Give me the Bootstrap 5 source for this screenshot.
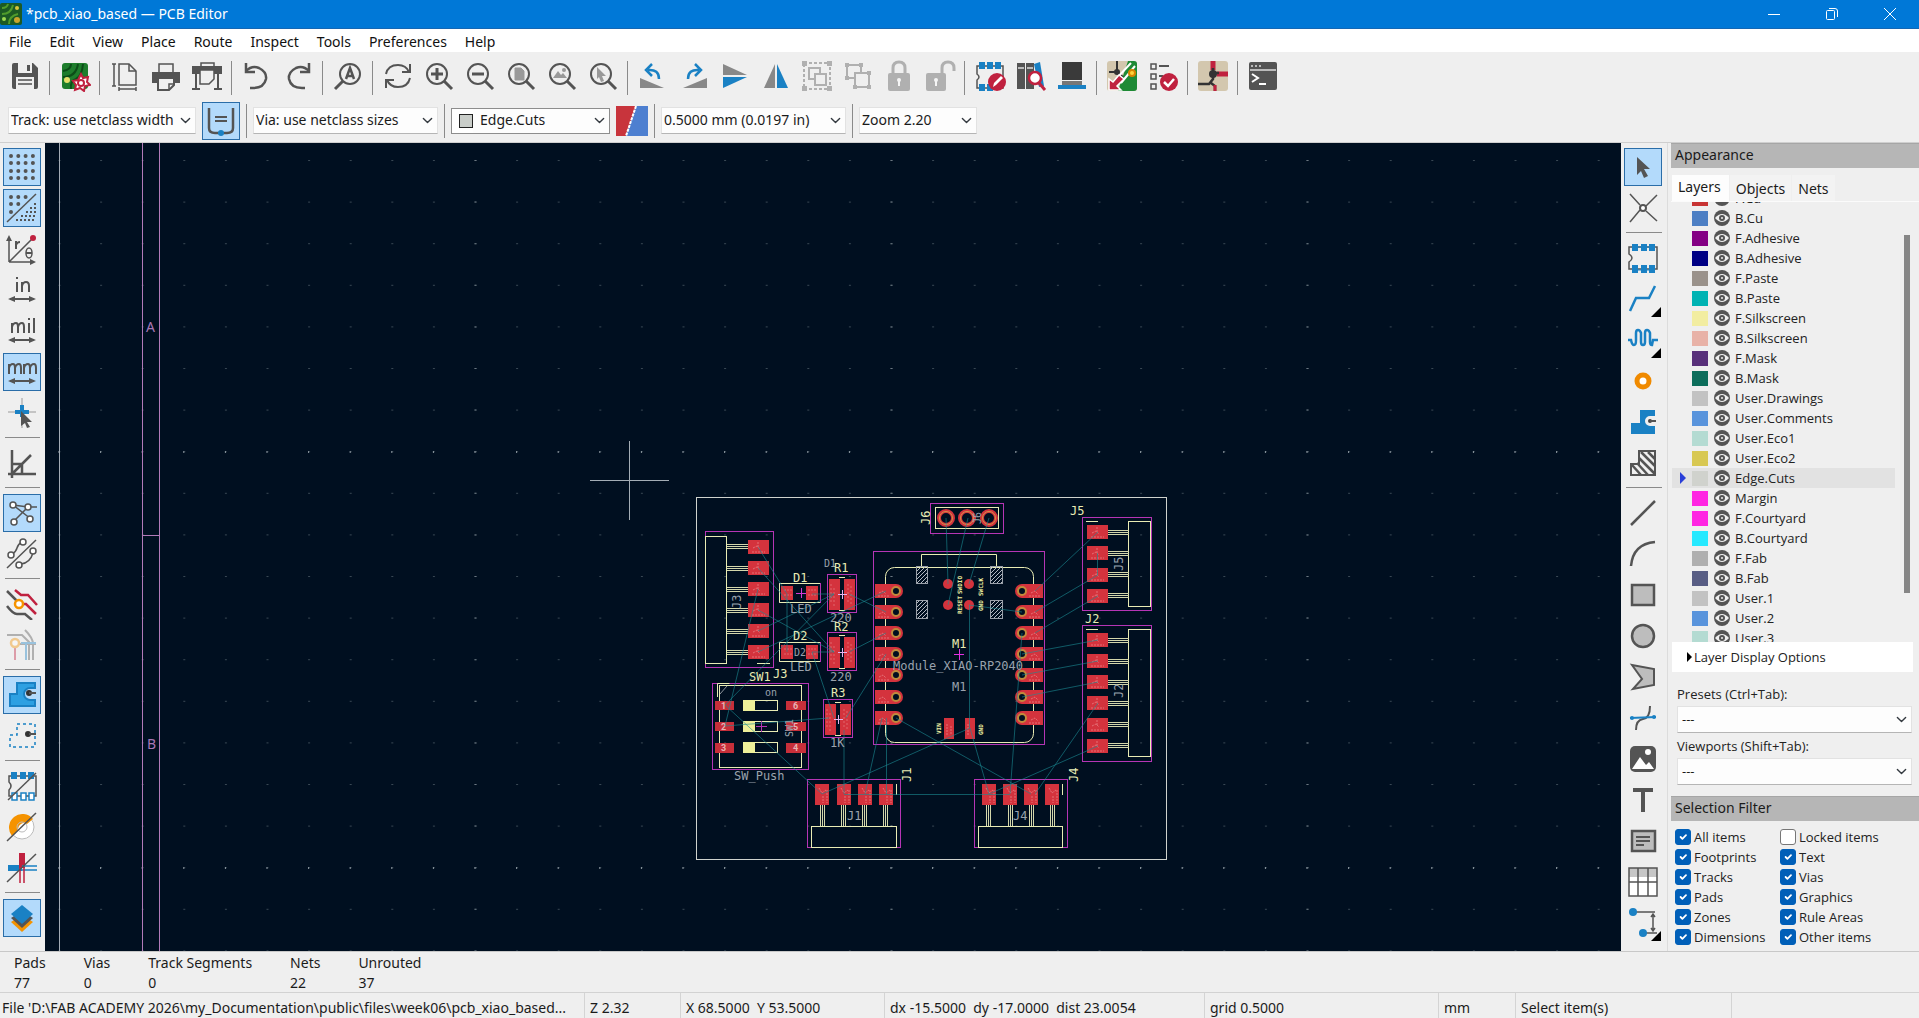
<!DOCTYPE html>
<html lang="en">
<head>
<meta charset="utf-8">
<meta name="viewport" content="width=device-width, initial-scale=1">
<title>*pcb_xiao_based — PCB Editor</title>
<link href="https://cdn.jsdelivr.net/npm/bootstrap@5.3.0/dist/css/bootstrap.min.css" rel="stylesheet">
<style>
  :root { --ui: #efefef; --ink: #545454; --blu: #1a81c4; --red: #c0213f; }
  body { font: 14px/20px "Noto Sans", "Open Sans", sans-serif; color: #1b1b1b; background: var(--ui); }
  svg { display: block; fill: none; }
  .title-strip { background: #0078d7; color: #fff; height: 29px; border-bottom: 1px solid #1467b4; }
  .title-strip button { width: 58px; height: 28px; color: #fff; }
  .menu-strip { background: #fff; height: 23px; }
  .menu-strip a { color: #111; padding: 0 9px; line-height: 25px; text-decoration: none; }
  .tool-btn { width: 38px; height: 38px; padding: 2px; border: 1px solid transparent; border-radius: 0; flex: none; position: relative;
    color: var(--ink); display: flex; align-items: center; justify-content: center; background: none; }
  .tool-btn svg { width: 32px; height: 32px; stroke: currentColor; stroke-width: 2; flex: none; }
  .tool-btn.on { background: #b3dafb; border-color: #2a6da8; }
  .tool-btn.off { opacity: .4; }
  .tool-btn.more::after { content: ""; position: absolute; right: 0; bottom: 0; border: 5px solid; border-color: transparent #000 #000 transparent; }
  .bar-main { height: 47px; padding: 5px 6px 0; gap: 3px; }
  .bar-main i, .bar-opts i { width: 1px; background: #8a8a8a; align-self: center; height: 34px; }
  .bar-main i { margin: 0 3px 0 2px; }
  .bar-opts { height: 44px; padding: 0 8px; gap: 6px; border-bottom: 1px solid #cfcfcf; }
  .pick { font: inherit; color: #1b1b1b; height: 27px; border-radius: 0; border: 1px solid #e2e2e2; border-bottom-color: #b5b5b5;
    padding: 0 18px 1px 2px; background-color: #fdfdfd; background-size: 11px 11px; background-position: right 4px center; }
  .w-track { width: 188px; } .w-via { width: 185px; } .w-zoom { width: 118px; }
  .swatch-pick { width: 159px; height: 26px; border: 1px solid #8d8d8d; background: #fff; }
  .swatch-pick b { width: 14px; height: 14px; margin-left: 7px; background: #c9cdc9; border: 1px solid #222; flex: none; }
  .swatch-pick select { border: 0; height: 24px; padding-left: 7px; }
  .rail { width: 45px; padding: 5px 3px 0; gap: 3px; flex: none; overflow: hidden; }
  .rail i { height: 1px; background: #8a8a8a; margin: 2px 2px 3px; flex: none; }
  .rail-r { width: 46px; }
  .board { background: #000f20; min-width: 0; }
  .board text { font: 12px "DejaVu Sans Mono", monospace; stroke: none; fill: #9aa2ad; }
  .board .silk { fill: #e9ecb4; }
  .board .grey-s { font-size: 10px; }
  .board .tiny { font: bold 6px "DejaVu Sans Mono", monospace; fill: #f0f2a0; }
  .board .pin { font: bold 9px Roboto, sans-serif; fill: #e9b2b4; }
  .board .frame-t { fill: #a977b5; font: 14px "Noto Sans", sans-serif; }
  .side { width: 252px; padding-left: 3px; background: var(--ui); flex: none; border-left: 1px solid #dcdcdc; }
  .side-head { background: #b6b6b6; height: 25px; line-height: 22px; padding-left: 4px; border-top: 1px solid #a6a6a6; flex: none; }
  .tab-row { height: 34px; padding: 7px 0 0 1px; border-bottom: 1px solid #fbfbfb; flex: none; }
  .tab-row button { border: 0; background: #f3f3f3; font: inherit; color: #1b1b1b; padding: 2px 6px 0; height: 26px; margin-right: 1px; }
  .tab-row button.cur { background: #fdfdfd; padding: 0 8px 2px 6px; }
  .side-small { font: 13px/20px "Open Sans", "Noto Sans", sans-serif; color: #222; }
  .layer-box { height: 440px; overflow: hidden; flex: 0 1 440px; margin-left: 1px; }
  .layer-box li { height: 20px; line-height: 20px; }
  .layer-box li.cur { background: #e2e2e2; }
  .layer-box .arr { width: 20px; padding-left: 7px; flex: none; }
  .layer-box .chip { width: 16px; height: 15px; margin-right: 6px; flex: none; }
  .layer-box svg { width: 16px; height: 16px; margin-right: 5px; flex: none; }
  .thumb-track { width: 24px; flex: none; padding: 33px 0 49px 9px; }
  .thumb-track span { display: block; width: 6px; height: 100%; background: #868686; }
  .fold { background: #fff; height: 30px; margin: 0 6px 0 1px; padding: 0 0 0 14px; border: 0; text-align: left; flex: none; }
  .side-form { padding: 12px 7px 0 6px; flex: none; }
  .side-form label { height: 22px; line-height: 20px; }
  .side-form .pick { margin-bottom: 3px; padding-left: 4px; }
  .filter-grid { padding: 6px 0 0 4px; flex: none; }
  .filter-grid div { width: 105px; height: 20px; }
  .filter-grid input { width: 16px; height: 16px; margin: 0; border: 1px solid #777; border-radius: 3px !important; flex: none; }
  .filter-grid input:checked { background-color: #005fb8; border-color: #005fb8; background-size: 12px; }
  .filter-grid label { padding-left: 3px; }
  .counts { height: 41px; padding-left: 14px; border-top: 1px solid #c8c8c8; }
  .counts th, .counts td { font-weight: 400; padding: 0 38px 0 0; line-height: 20px; text-align: left; }
  .counts table { margin-top: 1px; }
  .status-strip { height: 26px; border-top: 1px solid #d2d2d2; line-height: 29px; white-space: nowrap; }
  .status-strip span { border-right: 1px solid #d4d4d4; padding-left: 5px; flex: none; overflow: hidden; white-space: pre; }
  .status-strip .s-file { width: 585px; padding-left: 2px; } .s-z { width: 96px; } .s-xy { width: 204px; } .s-d { width: 320px; } .s-g { width: 234px; } .s-u { width: 77px; } .s-m { width: 216px; }
</style>
<script src="https://cdn.jsdelivr.net/npm/bootstrap@5.3.0/dist/js/bootstrap.bundle.min.js"></script>
</head>
<body class="vh-100 d-flex flex-column overflow-hidden">

<header class="title-strip d-flex align-items-center flex-shrink-0">
  <svg width="22" height="22" viewBox="0 0 22 22" class="me-1"><rect width="22" height="22" rx="2" fill="#1c5a23"/><path d="M2 5q5 0 6-4M2 11q9 0 11-9M9 21q0-8 9-10" stroke="#4f9c2c" stroke-width="2"/><circle cx="4" cy="16" r="2" fill="#9bd850"/><circle cx="17" cy="5" r="2" fill="#d7c53a"/><circle cx="17" cy="17" r="3" fill="#c9a52c"/></svg>
  <span class="flex-grow-1">*pcb_xiao_based — PCB Editor</span>
  <button class="btn p-0 border-0" aria-label="Minimize"><svg class="mx-auto" width="14" height="14" stroke="#fff"><path d="M1 7.500h12"/></svg></button>
  <button class="btn p-0 border-0" aria-label="Restore"><svg class="mx-auto" width="14" height="14" stroke="#fff"><rect x="1.500" y="3.500" width="8" height="9" rx="1"/><path d="M4 1.500h6q2.500 0 2.500 2.500v6"/></svg></button>
  <button class="btn p-0 border-0" aria-label="Close"><svg class="mx-auto" width="14" height="14" stroke="#fff"><path d="M1 1l12 12M13 1L1 13"/></svg></button>
  <span></span>
</header>

<nav class="menu-strip d-flex flex-shrink-0">
  <a href="#">File</a><a href="#">Edit</a><a href="#">View</a><a href="#">Place</a><a href="#">Route</a><a href="#">Inspect</a><a href="#">Tools</a><a href="#">Preferences</a><a href="#">Help</a>
</nav>

<div class="bar-main d-flex flex-shrink-0" role="toolbar" aria-label="Main">
  <button class="tool-btn" aria-label="Save"><svg viewBox="0 0 32 32"><path d="M3 5q0-2 2-2h19l5 5v19q0 2-2 2H5q-2 0-2-2z" fill="#545454" stroke="none"/><path d="M9 3h14v10H9zM7 17h18v12H7z" fill="#efefef" stroke="none"/><path d="M18 5h3v6h-3z" fill="#545454" stroke="none"/><path d="M9 20h14M9 24h14" stroke="#777"/></svg></button><i></i>
  <button class="tool-btn" aria-label="Board setup"><svg viewBox="0 0 32 32"><rect x="3" y="3" width="26" height="26" rx="3" fill="#1e7d2c" stroke="none"/><path d="M4 11q8-1 8-7M4 17q13 0 15-13M12 29q-1-8 5-10 6-3 7-15" stroke="#0c4d18"/><circle cx="8" cy="20" r="3" fill="#e6e06a" stroke="none"/><path d="M22 14l2 4 5-1-1 5 3 3-5 1-1 5-4-3-5 2 1-5-3-4 5-1z" fill="#fff" stroke="#c0213f"/><circle cx="22" cy="23" r="3" stroke="#c0213f"/></svg></button><i></i>
  <button class="tool-btn" aria-label="Page settings"><svg viewBox="0 0 32 32"><g stroke-width="1.500"><path d="M10 4h10l7 7v14H10z"/><path d="M20 4v7h7M5 4v22M3 4h4M3 26h4M10 29h17M10 27v4M27 27v4"/></g></svg></button>
  <button class="tool-btn" aria-label="Print"><svg viewBox="0 0 32 32"><path d="M9 12V4h14v8" stroke-width="1.500"/><path d="M2 12h28v11H2z" fill="#545454" stroke="none"/><path d="M8 18h16v7l-5 5H8z" fill="#efefef"/><path d="M19 29v-5h5" stroke-width="1.500"/></svg></button>
  <button class="tool-btn" aria-label="Plot"><svg viewBox="0 0 32 32"><path d="M10 6V3h13v3" stroke-width="1.500"/><path d="M1 6h30v8H1z" fill="#545454" stroke="none"/><path d="M9 10h14v9l-5 5H9z" fill="#efefef" stroke-width="1.500"/><path d="M5 14v14M27 14v14M1 29h8M23 29h8"/></svg></button><i></i>
  <button class="tool-btn" aria-label="Undo"><svg viewBox="0 0 32 32"><path d="M5 3v9h9" stroke-width="2.500"/><path d="M5 11q6-6 13-3 8 4 7 11-2 9-13 9H9" stroke-width="2.500"/></svg></button>
  <button class="tool-btn" aria-label="Redo"><svg viewBox="0 0 32 32"><path d="M27 3v9h-9" stroke-width="2.500"/><path d="M27 11q-6-6-13-3-8 4-7 11 2 9 13 9h3" stroke-width="2.500"/></svg></button><i></i>
  <button class="tool-btn" aria-label="Find"><svg viewBox="0 0 32 32"><circle cx="18" cy="14" r="10"/><path d="M11 21l-8 8" stroke-width="3"/><path d="M14 19l4-11 4 11M15 16h6" stroke-width="2.500"/></svg></button><i></i>
  <button class="tool-btn" aria-label="Refresh"><svg viewBox="0 0 32 32"><path d="M4 14q2-9 12-9 8 0 11 7M28 4v8h-8M28 18q-2 9-12 9-8 0-11-7M4 28v-8h8"/></svg></button>
  <button class="tool-btn" aria-label="Zoom in"><svg viewBox="0 0 32 32"><circle cx="14" cy="14" r="10"/><path d="M21 21l8 8" stroke-width="3"/><path d="M8 14h12M14 8v12" stroke-width="3"/></svg></button>
  <button class="tool-btn" aria-label="Zoom out"><svg viewBox="0 0 32 32"><circle cx="14" cy="14" r="10"/><path d="M21 21l8 8" stroke-width="3"/><path d="M8 14h12" stroke-width="3"/></svg></button>
  <button class="tool-btn" aria-label="Zoom to page"><svg viewBox="0 0 32 32"><circle cx="14" cy="14" r="10"/><path d="M21 21l8 8" stroke-width="3"/><path d="M10 8h6l3 3v9h-9z" fill="#999" stroke="#999" stroke-width="1"/></svg></button>
  <button class="tool-btn" aria-label="Zoom to objects"><svg viewBox="0 0 32 32"><circle cx="14" cy="14" r="10"/><path d="M21 21l8 8" stroke-width="3"/><path d="M7 18l5-7 3 4 2-2 4 5z" fill="#999" stroke="none"/><circle cx="18" cy="10" r="2" fill="#999" stroke="none"/></svg></button>
  <button class="tool-btn" aria-label="Zoom to selection"><svg viewBox="0 0 32 32"><circle cx="14" cy="14" r="10"/><path d="M21 21l8 8" stroke-width="3"/><path d="M10 7l9 9-4 0 2 5-3 1-2-5-2 2z" fill="#999" stroke="none"/></svg></button><i></i>
  <button class="tool-btn" aria-label="Rotate counterclockwise"><svg viewBox="0 0 32 32"><path d="M3 18l24 10H3z" fill="#888" stroke="none"/><path d="M11 10q11-1 11 9M15 4l-6 6 6 6" stroke="#1a81c4" stroke-width="2.500"/></svg></button>
  <button class="tool-btn" aria-label="Rotate clockwise"><svg viewBox="0 0 32 32"><path d="M29 18L5 28h24z" fill="#888" stroke="none"/><path d="M21 10q-11-1-11 9M17 4l6 6-6 6" stroke="#1a81c4" stroke-width="2.500"/></svg></button>
  <button class="tool-btn" aria-label="Mirror vertically"><svg viewBox="0 0 32 32"><path d="M4 4l24 11H4z" fill="#888" stroke="none"/><path d="M4 28l24-11H4z" fill="#1a81c4" stroke="none"/></svg></button>
  <button class="tool-btn" aria-label="Mirror horizontally"><svg viewBox="0 0 32 32"><path d="M15 4v24H4z" fill="#888" stroke="none"/><path d="M17 4v24h11z" fill="#1a81c4" stroke="none"/></svg></button>
  <button class="tool-btn off" aria-label="Group"><svg viewBox="0 0 32 32"><rect x="3" y="3" width="26" height="26" stroke-dasharray="3 2"/><path d="M1 1h5v5H1zM26 1h5v5h-5zM1 26h5v5H1zM26 26h5v5h-5z" fill="#545454" stroke="none"/><path d="M8 8h11v11H8z"/><path d="M14 14h11v11H14z" fill="#efefef"/></svg></button>
  <button class="tool-btn off" aria-label="Ungroup"><svg viewBox="0 0 32 32"><path d="M5 5h14v13H5z"/><path d="M13 13h14v14H13z" fill="#efefef"/><path d="M3 3h4v4H3zM17 3h4v4h-4zM3 16h4v4H3zM11 25h4v4h-4zM25 25h4v4h-4zM25 11h4v4h-4z" fill="#545454" stroke="none"/></svg></button>
  <button class="tool-btn off" aria-label="Lock"><svg viewBox="0 0 32 32"><rect x="5" y="13" width="22" height="18" rx="2" fill="#545454" stroke="none"/><path d="M10 14V8q0-6 6-6t6 6v6" stroke-width="3"/><circle cx="16" cy="20" r="2" fill="#fff" stroke="none"/><path d="M16 20v6" stroke="#fff"/></svg></button>
  <button class="tool-btn off" aria-label="Unlock"><svg viewBox="0 0 32 32"><rect x="2" y="13" width="20" height="18" rx="2" fill="#545454" stroke="none"/><path d="M18 14V8q0-6 6-6t6 6v3" stroke-width="3"/><circle cx="12" cy="20" r="2" fill="#fff" stroke="none"/><path d="M12 20v6" stroke="#fff"/></svg></button><i></i>
  <button class="tool-btn" aria-label="Footprint editor"><svg viewBox="0 0 32 32"><path d="M3 6h26v22H3v-8q4-3 0-6z" stroke-width="1.500"/><path d="M5 2h6v7H5zM13 2h6v7h-6zM21 2h6v7h-6zM5 24h6v7H5zM13 24h6v7h-6z" fill="#1a81c4" stroke="none"/><circle cx="23" cy="22" r="9" fill="#c0213f" stroke="none"/><path d="M19 27l1-4 7-7 2 2-7 7z" fill="#fff" stroke="none"/></svg></button>
  <button class="tool-btn" aria-label="Footprint browser"><svg viewBox="0 0 32 32"><path d="M2 3h8v26H2zM11 3h8v26h-8z" fill="#545454" stroke="none"/><path d="M3 8h6M12 8h6" stroke="#bbb"/><path d="M19 4l6-2 4 24-5 1z" fill="#1a81c4" stroke="none"/><circle cx="20" cy="18" r="6" fill="#fff" stroke="#c0213f" stroke-width="2.500"/><path d="M24 23l6 7" stroke="#c0213f" stroke-width="3"/></svg></button>
  <button class="tool-btn" aria-label="3D viewer"><svg viewBox="0 0 32 32"><path d="M6 2h20v18H6z" fill="#3a3a3a" stroke="none"/><path d="M6 21h20v4H6z" fill="#777" stroke="none"/><path d="M2 25h28v4H2z" fill="#1a81c4" stroke="none"/></svg></button><i></i>
  <button class="tool-btn" aria-label="Update from schematic"><svg viewBox="0 0 32 32"><rect x="1" y="1" width="30" height="30" rx="3" fill="#d3c7ae" stroke="none"/><path d="M22 1h6q3 0 3 3v24q0 3-3 3H12z" fill="#1e8a35" stroke="none"/><path d="M11 1v11M3 12h8l6 5" stroke="#333"/><circle cx="11" cy="12" r="3" fill="#333" stroke="none"/><path d="M25 3L10 19M29 6L15 23" stroke="#fff"/><path d="M3 19v11h12l-4-4 7-7-5-4-6 7z" fill="#c0213f" stroke="#fff" stroke-width="1.500"/><circle cx="26" cy="13" r="3" fill="#ffd23a" stroke="#d88400"/></svg></button>
  <button class="tool-btn" aria-label="Design rules check"><svg viewBox="0 0 32 32"><path d="M4 4h5v5H4zM4 14h5v5H4zM4 24h5v5H4z" stroke-width="1.500"/><path d="M12 6h10M12 16h4"/><circle cx="22" cy="22" r="9" fill="#c0213f" stroke="none"/><path d="M17 22l4 4 6-7" stroke="#fff" stroke-width="2.500"/></svg></button><i></i>
  <button class="tool-btn" aria-label="Schematic editor"><svg viewBox="0 0 32 32"><rect x="1" y="1" width="30" height="30" rx="3" fill="#d3c7ae" stroke="none"/><path d="M16 1v9" stroke="#c0213f" stroke-width="5"/><path d="M20 14h11" stroke="#c0213f" stroke-width="5"/><path d="M16 8v11l-4 5H1M14 23l4 3v5M16 13h6" stroke="#333" stroke-width="2.500"/><circle cx="16" cy="14" r="4" fill="#333" stroke="none"/><path d="M18 25v6" stroke="#c0213f" stroke-width="3"/></svg></button><i></i>
  <button class="tool-btn" aria-label="Scripting console"><svg viewBox="0 0 32 32"><rect x="2" y="2" width="28" height="28" rx="2" fill="#545454" stroke="none"/><path d="M4 6h2M8 6h2M12 6h2M3 10h26" stroke="#ddd" stroke-width="1.500"/><path d="M5 14l6 4-6 4M12 24h7" stroke="#fff"/></svg></button>
</div>

<div class="bar-opts d-flex align-items-center flex-shrink-0" role="toolbar" aria-label="Options">
  <select class="form-select pick w-track" aria-label="Track width"><option>Track: use netclass width</option></select>
  <button class="tool-btn on" aria-label="Auto track width"><svg viewBox="0 0 32 32"><path d="M4 3v20q0 5 6 5h12q6 0 6-5V3" stroke-width="2.500"/><path d="M10 12h12M10 16h12"/><circle cx="16" cy="28" r="3" fill="#1a81c4" stroke="none"/></svg></button><i></i>
  <select class="form-select pick w-via" aria-label="Via size"><option>Via: use netclass sizes</option></select><i></i>
  <div class="swatch-pick d-flex align-items-center"><b></b><select class="form-select pick" aria-label="Active layer"><option>Edge.Cuts</option></select></div>
  <svg width="32" height="30" viewBox="0 0 32 30" role="img" aria-label="Layer pair"><path d="M0 0h20L10 30H0z" fill="#c8343c"/><path d="M20 0h12v30H10z" fill="#4d7fd0"/><path d="M20 0L10 30" stroke="#fff" stroke-width="2" stroke-dasharray="3 1"/></svg><i></i>
  <select class="form-select pick w-via" aria-label="Grid"><option>0.5000 mm (0.0197 in)</option></select><i></i>
  <select class="form-select pick w-zoom" aria-label="Zoom"><option>Zoom 2.20</option></select>
</div>

<main class="d-flex flex-grow-1 overflow-hidden">
  <div class="rail d-flex flex-column" role="toolbar" aria-label="View options">
    <button class="tool-btn on" aria-label="Show grid"><svg viewBox="0 0 32 32"><path d="M5 5h24M5 12h24M5 20h24M5 27h24" stroke-width="4" stroke-linecap="round" stroke-dasharray="0 7.300"/></svg></button>
    <button class="tool-btn on" aria-label="Grid overrides"><svg viewBox="0 0 32 32"><path d="M5 5h16M5 12h9M5 20h1" stroke-width="4" stroke-linecap="round" stroke-dasharray="0 7.300"/><path d="M1 30L30 2" stroke-width="1.500"/><path d="M28 12h2M24 16h6M20 20h10M15 24h15M10 28h20" stroke-dasharray="2 2"/></svg></button>
    <button class="tool-btn" aria-label="Polar coordinates"><svg viewBox="0 0 32 32"><path d="M3 29V6M3 29h23M3 29L26 6" stroke-width="1.500"/><path d="M0 8l3-6 3 6zM24 26l6 3-6 3z" fill="#545454" stroke="none"/><circle cx="27" cy="5" r="3" fill="#c0213f" stroke="none"/><path d="M10 16V8M10 12q1-3 4-3" /><ellipse cx="23" cy="20" rx="3" ry="5" stroke-width="1.500"/><path d="M20 20h6"/></svg></button>
    <button class="tool-btn" aria-label="Inches"><svg viewBox="0 0 32 32"><path d="M11 8v10M11 3v2M16 18V8M16 12q1-4 4-4 3 0 3 4v6"/><path d="M4 25h24"/><path d="M9 22l-7 3 7 3zM23 22l7 3-7 3z" fill="#545454" stroke="none"/></svg></button>
    <button class="tool-btn" aria-label="Mils"><svg viewBox="0 0 32 32"><path d="M6 18V8M6 12q1-4 4-4 2 0 2 4v6M12 12q1-4 4-4 2 0 2 4v6M23 8v10M23 3v2M28 3v15"/><path d="M4 25h24"/><path d="M9 22l-7 3 7 3zM23 22l7 3-7 3z" fill="#545454" stroke="none"/></svg></button>
    <button class="tool-btn on" aria-label="Millimeters"><svg viewBox="0 0 32 32"><path d="M3 18V8M3 12q1-4 4-4 2 0 2 4v6M9 12q1-4 4-4 2 0 2 4v6M18 18V8M18 12q1-4 4-4 2 0 2 4v6M24 12q1-4 4-4 2 0 2 4v6"/><path d="M4 25h24"/><path d="M9 22l-7 3 7 3zM23 22l7 3-7 3z" fill="#545454" stroke="none"/></svg></button>
    <button class="tool-btn" aria-label="Full crosshair"><svg viewBox="0 0 32 32"><path d="M2 15h28M16 1v30" stroke="#999" stroke-width="1"/><path d="M9 15h14M16 8v12" stroke="#1a81c4" stroke-width="4"/><path d="M15 14l11 11-5 0 3 5-3 1-2-5-4 3z" fill="#545454" stroke="none"/></svg></button><i></i>
    <button class="tool-btn" aria-label="Limit angles"><svg viewBox="0 0 32 32"><path d="M6 3v28M2 27h28M5 28L25 8M6 17h10v10" stroke-width="2.500"/></svg></button><i></i>
    <button class="tool-btn on" aria-label="Ratsnest"><svg viewBox="0 0 32 32"><path d="M7 8l18 14M7 25L22 10h9" stroke-width="1.500"/><path d="M7 8l15 2" stroke-width="1.500"/><g fill="#fff" stroke-width="1.500"><circle cx="7" cy="8" r="3"/><circle cx="22" cy="10" r="3"/><circle cx="24" cy="22" r="3"/><circle cx="8" cy="25" r="3"/></g></svg></button>
    <button class="tool-btn" aria-label="Curved ratsnest"><svg viewBox="0 0 32 32" ><path d="M1 30L30 2M6 16q4-2 5-6t5-6M15 26q9-1 12-11" stroke-width="1.500"/><g fill="#fff" stroke-width="1.500"><circle cx="5" cy="17" r="3"/><circle cx="17" cy="4" r="3"/><circle cx="13" cy="27" r="3"/><circle cx="27" cy="13" r="3"/></g></svg></button><i></i>
    <button class="tool-btn" aria-label="High contrast"><svg viewBox="0 0 32 32" ><path d="M1 3l9 9 5 4M1 18q6 8 10 8h8l7 6" stroke-width="2.500"/><path d="M9 2l6 5h7l9 10M15 16h5l10 10" stroke="#c0213f" stroke-width="2.500"/><circle cx="13" cy="16" r="4" fill="#fff" stroke="#f59300" stroke-width="2.500"/></svg></button>
    <button class="tool-btn off" aria-label="Net highlight"><svg viewBox="0 0 32 32"><path d="M1 6h15l7 7v18M19 1q8 8 8 14v16M12 15h18" /><path d="M9 17v14" stroke="#c0213f"/><path d="M15 14h15M20 15v16" stroke="#1a81c4"/><circle cx="9" cy="14" r="4" fill="#fff" stroke="#f59300" stroke-width="2.500"/></svg></button><i></i>
    <button class="tool-btn on" aria-label="Filled zones"><svg viewBox="0 0 32 32"><path d="M11 4h18v5h-5a5 5 0 0 0 0 12h5v6H4V15h7z" fill="#2ea0e2" stroke="#1a81c4"/><circle cx="23" cy="14" r="2" fill="#333" stroke="#333"/><path d="M23 14h7"/></svg></button>
    <button class="tool-btn" aria-label="Zone outlines"><svg viewBox="0 0 32 32"><path d="M11 4h18v23H4V15h7z" stroke="#1a81c4" stroke-dasharray="3 3" stroke-width="1.500"/><circle cx="22" cy="14" r="2" fill="#333" stroke="#333"/><path d="M23 14h7"/></svg></button><i></i>
    <button class="tool-btn" aria-label="Sketch pads"><svg viewBox="0 0 32 32"><path d="M3 6h27v20H3v-6q4-4 0-8z" stroke-width="1.500"/><path d="M5 2h6v7H5zM14 2h6v7h-6zM22 2h6v7h-6z" fill="#1a81c4" stroke="none"/><path d="M6 23h5v7H6zM15 23h5v7h-5zM23 23h5v7h-5z" fill="#fff" stroke="#1a81c4" stroke-width="1.500"/><path d="M2 30L30 3" stroke-width="1.500"/></svg></button>
    <button class="tool-btn" aria-label="Sketch vias"><svg viewBox="0 0 32 32"><circle cx="16" cy="16" r="12" fill="#fff" stroke="#bbb" stroke-width="1"/><path d="M6 25A12 12 0 0 1 27 8l-6 5a6 6 0 0 0-9 6z" fill="#f59300" stroke="none"/><circle cx="16" cy="16" r="5" stroke="#bbb" stroke-width="1"/><path d="M1 30L30 2" stroke-width="1.500"/></svg></button>
    <button class="tool-btn" aria-label="Sketch tracks"><svg viewBox="0 0 32 32"><path d="M2 16h14" stroke="#1a81c4" stroke-width="6"/><path d="M16 1v15" stroke="#c0213f" stroke-width="6"/><path d="M16 14h15M16 18h15" stroke="#1a81c4" stroke-width="1.500"/><path d="M14 16v15M18 16v15" stroke="#c0213f" stroke-width="1.500"/><path d="M1 30L30 2" stroke-width="1.500"/></svg></button><i></i>
    <button class="tool-btn on" aria-label="Layers manager"><svg viewBox="0 0 32 32"><path d="M5 20l11 10 11-10-11-7z" fill="#f59300" stroke="none"/><path d="M5 16l11 10 11-10-11-7z" fill="#545454" stroke="none"/><path d="M5 12l11-9 11 9-11 10z" fill="#1a81c4" stroke="none"/></svg></button>
  </div>

  <section class="board flex-grow-1" aria-label="Board canvas">
  <svg width="100%" height="100%" viewBox="45 143 1576 808" preserveAspectRatio="xMinYMin slice">
    <defs>
      <pattern id="dots" patternUnits="userSpaceOnUse" x="58.500" y="160" width="41.600" height="41.600"><rect width="2" height="1" fill="#384753"/></pattern>
      <pattern id="hatch" patternUnits="userSpaceOnUse" width="4" height="4"><path d="M0 4L4 0" stroke="#b5bbc4"/></pattern>
      <g id="padH"><rect x="-10" y="-7" width="21" height="14" fill="#d4333d"/><path d="M-5 1l4-2 3 3M-6 5h13M0-5v5" stroke="#ee9a9c" stroke-opacity=".6" stroke-dasharray="2 1"/></g>
      <g id="padV"><rect x="-7" y="-10" width="14" height="21" fill="#d4333d"/><path d="M-3-6l3 5 4-3M5-4v13M1 2v7" stroke="#ee9a9c" stroke-opacity=".6" stroke-dasharray="2 1"/></g>
      <g id="pinH"><path d="M0-1.500h21M0 .500h21M0 2.500h21" stroke="#d4d7ab"/></g>
      <g id="pinV"><path d="M-1.500 0v21M.500 0v21M2.500 0v21" stroke="#d4d7ab"/></g>
      <g id="castL"><rect x="-21" y="-7" width="21" height="14" fill="#d4333d"/><circle r="7" fill="#d4333d"/><circle r="4" fill="#000f20" stroke="#c08b3c" stroke-width="2"/><path d="M-17 2l4-2 3 3M-18 5h12" stroke="#ee9a9c" stroke-opacity=".6" stroke-dasharray="2 1"/></g>
      <g id="castR"><rect y="-7" width="21" height="14" fill="#d4333d"/><circle r="7" fill="#d4333d"/><circle r="4" fill="#000f20" stroke="#c08b3c" stroke-width="2"/><path d="M9 2l4-2 3 3M7 5h12" stroke="#ee9a9c" stroke-opacity=".6" stroke-dasharray="2 1"/></g>
      <g id="res"><rect x="-14.500" y="-19.500" width="29" height="38" stroke="#b535b5"/><path d="M-13-15h11v31h-11zM2-15h11v31H2z" fill="#d4333d"/><path d="M-11-10v20M-8-6v18M6-10v20M9-8v18" stroke="#ee9a9c" stroke-opacity=".5" stroke-dasharray="2 2"/><path d="M-3-16.500h6M-3 16.500h6" stroke="#e9ecb4"/><path d="M-4 .500h9M.500-4v9" stroke="#e4b4ee"/></g>
      <g id="led"><rect x="-20.500" y="-9.500" width="41" height="19" stroke="#b535b5"/><path d="M20-9.500h-40.500v19h40.500" stroke="#e9ecb4"/><path d="M-19-7h12v14h-12zM6-7h12V7H6z" fill="#d4333d"/><path d="M-16-3h8M-16 2h8M8-3h8M8 2h8" stroke="#ee9a9c" stroke-opacity=".5" stroke-dasharray="2 1"/></g>
      <g id="dip"><rect x=".500" y=".500" width="34" height="10" stroke="#e9ecb4"/><rect width="12" height="11" fill="#eef09a"/></g>
      <g id="hole"><circle r="7" fill="#000f20" stroke="#d4333d" stroke-width="4"/><circle r="6.500" stroke="#d29445"/></g>
    </defs>
    <rect x="45" y="143" width="1576" height="808" fill="url(#dots)"/>
    <path d="M58.500 452H1621M58.500 868H1621" stroke="#8d98a1" stroke-width="2" stroke-dasharray="1 40.600"/>
    <path d="M475.500 160V951M891.500 160V951M1307.500 160V951" stroke="#6b7781" stroke-width="2" stroke-dasharray="1 40.600"/>
    <path d="M59.500 143V951" stroke="#a3abb5"/>
    <path d="M142.500 143V951M159.500 143V951M142.500 535.500h17" stroke="#b27ab8"/>
    <text class="frame-t" x="146" y="332">A</text><text class="frame-t" x="147" y="749">B</text>
    <path d="M590 480.500h79M629.500 441v79" stroke="#a4adb5"/>
    <rect x="696.500" y="497.500" width="470" height="362" stroke="#cfd2cd"/>

    <!-- courtyards -->
    <g stroke="#b535b5">
      <rect x="705.500" y="531.500" width="68" height="136"/><rect x="712.500" y="683.500" width="96" height="86"/>
      <rect x="807.500" y="779.500" width="93" height="68"/><rect x="974.500" y="779.500" width="93" height="68"/>
      <rect x="930.500" y="503.500" width="73" height="30"/><rect x="873.500" y="551.500" width="171" height="193"/>
      <rect x="1082.500" y="517.500" width="69" height="93"/><rect x="1082.500" y="625.500" width="69" height="136"/>
      <path d="M954 654.500h10M959.500 649v11" stroke="#e531e5"/>
    </g>
    <!-- silkscreen outlines -->
    <g stroke="#e9ecb4">
      <rect x="705.500" y="536.500" width="21" height="127"/><path d="M757 663.500h13"/>
      <rect x="719.500" y="685.500" width="82" height="82"/><path d="M717.500 697v-13.500h12" /><path d="M720 694l7-8" stroke="#8d939b"/>
      <rect x="811.500" y="826.500" width="85" height="21"/><path d="M896.500 784v11"/>
      <rect x="978.500" y="826.500" width="84" height="21"/><path d="M1062.500 784v11"/>
      <rect x="935.500" y="507.500" width="63" height="21"/>
      <rect x="885.500" y="567.500" width="148" height="175" rx="9"/><path d="M921.500 567v-12.500h75V567"/>
      <rect x="1128.500" y="521.500" width="22" height="85"/><path d="M1086 521.500h12"/>
      <rect x="1128.500" y="629.500" width="22" height="127"/><path d="M1086 629.500h12"/>
    </g>
    <g fill="url(#hatch)" stroke="#9ba1aa"><rect x="916.500" y="566.500" width="11" height="17"/><rect x="916.500" y="600.500" width="11" height="18"/><rect x="990.500" y="566.500" width="12" height="17"/><rect x="990.500" y="600.500" width="12" height="18"/></g>

    <!-- J3 -->
    <use href="#pinH" x="727" y="546"/><use href="#pinH" x="727" y="568"/><use href="#pinH" x="727" y="589"/><use href="#pinH" x="727" y="610"/><use href="#pinH" x="727" y="631"/><use href="#pinH" x="727" y="652"/>
    <use href="#padH" x="758" y="547"/><use href="#padH" x="758" y="568"/><use href="#padH" x="758" y="589"/><use href="#padH" x="758" y="610"/><use href="#padH" x="758" y="631"/><use href="#padH" x="758" y="652"/>
    <!-- J5, J2 -->
    <use href="#pinH" x="1108" y="532"/><use href="#pinH" x="1108" y="553"/><use href="#pinH" x="1108" y="574"/><use href="#pinH" x="1108" y="595"/>
    <use href="#padH" x="1097" y="532"/><use href="#padH" x="1097" y="553"/><use href="#padH" x="1097" y="575"/><use href="#padH" x="1097" y="596"/>
    <use href="#pinH" x="1108" y="640"/><use href="#pinH" x="1108" y="661"/><use href="#pinH" x="1108" y="682"/><use href="#pinH" x="1108" y="703"/><use href="#pinH" x="1108" y="724"/><use href="#pinH" x="1108" y="745"/>
    <use href="#padH" x="1097" y="640"/><use href="#padH" x="1097" y="661"/><use href="#padH" x="1097" y="682"/><use href="#padH" x="1097" y="703"/><use href="#padH" x="1097" y="725"/><use href="#padH" x="1097" y="746"/>
    <!-- J1, J4 -->
    <use href="#pinV" x="822" y="805"/><use href="#pinV" x="843" y="805"/><use href="#pinV" x="864" y="805"/><use href="#pinV" x="885" y="805"/>
    <use href="#padV" x="822" y="794"/><use href="#padV" x="844" y="794"/><use href="#padV" x="865" y="794"/><use href="#padV" x="886" y="794"/>
    <use href="#pinV" x="988" y="805"/><use href="#pinV" x="1010" y="805"/><use href="#pinV" x="1031" y="805"/><use href="#pinV" x="1052" y="805"/>
    <use href="#padV" x="989" y="794"/><use href="#padV" x="1010" y="794"/><use href="#padV" x="1031" y="794"/><use href="#padV" x="1052" y="794"/>
    <!-- M1 -->
    <use href="#castL" x="896" y="591"/><use href="#castL" x="896" y="612"/><use href="#castL" x="896" y="633"/><use href="#castL" x="896" y="654"/><use href="#castL" x="896" y="675"/><use href="#castL" x="896" y="697"/><use href="#castL" x="896" y="718"/>
    <use href="#castR" x="1022" y="591"/><use href="#castR" x="1022" y="612"/><use href="#castR" x="1022" y="633"/><use href="#castR" x="1022" y="654"/><use href="#castR" x="1022" y="675"/><use href="#castR" x="1022" y="697"/><use href="#castR" x="1022" y="718"/>
    <g fill="#d4333d"><circle cx="948" cy="584" r="5"/><circle cx="969" cy="584" r="5"/><circle cx="948" cy="605" r="5"/><circle cx="969" cy="605" r="5"/><path d="M944 718h10v21h-10zM965 718h10v21h-10z"/></g>
    <path d="M947 724v11M951 726v9M968 724v11" stroke="#ee9a9c" stroke-opacity=".6" stroke-dasharray="2 1"/>
    <!-- J6 -->
    <use href="#hole" x="946" y="518"/><use href="#hole" x="967" y="518"/><use href="#hole" x="989" y="518"/>
    <!-- resistors and LEDs -->
    <use href="#res" x="842" y="594"/><use href="#res" x="842" y="652"/><use href="#res" x="838" y="719"/>
    <use href="#led" x="800" y="593"/><use href="#led" x="800" y="652"/><path d="M796 593.500h10M801.500 588v10" stroke="#d43ad4"/>
    <!-- SW1 -->
    <g fill="#c72f3a"><path d="M715 701h19v9h-19zM715 722h19v9h-19zM715 743h19v10h-19zM786 701h20v9h-20zM786 722h20v9h-20zM786 743h20v10h-20z"/></g>
    <use href="#dip" x="743" y="700"/><use href="#dip" x="743" y="721"/><use href="#dip" x="743" y="742"/>
    <path d="M756 726.500h11M761.500 721v11" stroke="#b535b5"/>
    <text class="pin" x="721" y="709">1</text><text class="pin" x="721" y="730">2</text><text class="pin" x="721" y="751">3</text><text class="pin" x="793" y="709">6</text><text class="pin" x="793" y="730">5</text><text class="pin" x="793" y="751">4</text>

    <!-- ratsnest -->
    <g stroke="#1b8c94" stroke-opacity=".6">
      <path d="M758 547L787 594V652M758 568L834 652M758 589L725 726M758 610L834 652M758 631L834 594M758 652L886 591M812 594h22M849 594L886 612M812 652h22M849 652L886 633M812 652L834 718M846 718L886 654M829 718L725 726M725 705L834 594M725 705L822 794M844 730V794M822 794L970 728M865 794L882 718M886.500 794V718M844 794.500H1010"/>
      <path d="M896 718L1031 794M970 728L989 794M969.500 605V728M969 605L1022 612M946 518L948 584M968 518L948 605M989 518L969 584M1035 591L1098 532M1035 612L1098 575M1035 633L1098 596M1097.500 553V575M1022 654L1098 640M1022 675L1098 661M1022 697L1098 682M1022 633L1010 794M1098 703L1035 794M1098 746L989 794"/>
    </g>

    <!-- labels -->
    <text class="grey-s" x="824" y="567">D1</text><text class="silk" x="793" y="582">D1</text><text x="790" y="613">LED</text><text class="silk" x="834" y="572">R1</text><text x="830" y="622">220</text>
    <text class="silk" x="793" y="640">D2</text><text x="790" y="671">LED</text><text class="silk" x="834" y="631">R2</text><text x="830" y="681">220</text>
    <text class="grey-s" x="794" y="656">D2</text>
    <text class="silk" x="831" y="697">R3</text><text x="830" y="747">1K</text>
    <text class="silk" x="749" y="681">SW1</text><text class="silk" x="773" y="678">J3</text><text class="grey-s" x="765" y="696">on</text><text x="734" y="780">SW_Push</text>
    <text transform="translate(741 609) rotate(-90)">J3</text><text class="grey-s" transform="translate(793 737) rotate(-90)">SW1</text>
    <text class="silk" x="1070" y="515">J5</text><text class="silk" x="1085" y="623">J2</text>
    <text transform="translate(1123 571) rotate(-90)">J5</text><text transform="translate(1123 698) rotate(-90)">J2</text>
    <text x="847" y="820">J1</text><text x="1013" y="820">J4</text>
    <text class="silk" transform="translate(911 782) rotate(-90)">J1</text><text class="silk" transform="translate(1078 782) rotate(-90)">J4</text>
    <text class="silk" transform="translate(930 525) rotate(-90)">J6</text><text class="grey-s" transform="translate(981 524) rotate(-90)">J6</text>
    <text class="silk" x="952" y="648">M1</text><text x="893" y="670">Module_XIAO-RP2040</text><text x="952" y="691">M1</text>
    <text class="tiny" transform="translate(962 614) rotate(-90)">RESET</text><text class="tiny" transform="translate(962 594) rotate(-90)">SWDIO</text>
    <text class="tiny" transform="translate(983 611) rotate(-90)">GND</text><text class="tiny" transform="translate(983 596) rotate(-90)">SWCLK</text>
    <text class="tiny" transform="translate(941 734) rotate(-90)">VIN</text><text class="tiny" transform="translate(983 735) rotate(-90)">GND</text>
  </svg>
  </section>

  <div class="rail rail-r d-flex flex-column" role="toolbar" aria-label="Drawing tools">
    <button class="tool-btn on" aria-label="Select"><svg viewBox="0 0 32 32"><path d="M10 6l13 12h-6l4 7-4 2-3-7-4 4z" fill="#545454" stroke="none"/></svg></button>
    <button class="tool-btn" aria-label="Local ratsnest"><svg viewBox="0 0 32 32"><path d="M3 2l10 11M30 3L19 14M19 19l11 10M13 18L3 30" stroke-width="1.500"/><circle cx="16" cy="16" r="3" fill="#fff"/></svg></button><i></i>
    <button class="tool-btn" aria-label="Place footprint"><svg viewBox="0 0 32 32"><path d="M2 5h28v22H2v-7q6-4 0-8z" stroke-width="1.500"/><path d="M5 2h6v7H5zM14 2h6v7h-6zM22 2h6v7h-6zM5 23h6v8H5zM14 23h6v8h-6zM22 23h6v8h-6z" fill="#1a81c4" stroke="none"/><path d="M5 5h22M5 28h22" stroke="#1a81c4" stroke-width="1"/></svg></button>
    <button class="tool-btn more" aria-label="Route track"><svg viewBox="0 0 32 32"><path d="M3 28l6-13h13l6-12" stroke="#1a81c4" stroke-width="2.500"/></svg></button>
    <button class="tool-btn more" aria-label="Tune length"><svg viewBox="0 0 32 32"><path d="M1 16h3q1 5 3 5t2-5V9q0-3 2-3t3 3v9q0 3 2 3t2-3V9q0-3 2-3t3 3v9q0 3 2 3l1-5h5" stroke="#1a81c4" stroke-width="2.500"/></svg></button>
    <button class="tool-btn" aria-label="Add via"><svg viewBox="0 0 32 32"><circle cx="16" cy="16" r="6" fill="#fff" stroke="#f08a00" stroke-width="5"/></svg></button>
    <button class="tool-btn" aria-label="Add zone"><svg viewBox="0 0 32 32"><path d="M13 4h15v6h-5a4 4 0 0 0 0 10h5v8H4V17h9z" fill="#1a81c4" stroke="none"/><circle cx="23" cy="15" r="2" fill="#444" stroke="none"/><path d="M23 15h6"/></svg></button>
    <button class="tool-btn" aria-label="Rule area"><svg viewBox="0 0 32 32"><path d="M12 4h16v24H4V17h8z"/><path d="M12 11l16 16M14 5l14 14M21 5l7 7M10 16l11 12M5 18l9 10" stroke-width="2.500"/></svg></button><i></i>
    <button class="tool-btn" aria-label="Draw line"><svg viewBox="0 0 32 32"><path d="M4 28L28 4" stroke-width="2.500"/></svg></button>
    <button class="tool-btn" aria-label="Draw arc"><svg viewBox="0 0 32 32"><path d="M4 28Q6 6 28 4" stroke-width="2.500"/></svg></button>
    <button class="tool-btn" aria-label="Draw rectangle"><svg viewBox="0 0 32 32"><path d="M5 6h22v20H5z" fill="#bdbdbd" stroke-width="2.500"/></svg></button>
    <button class="tool-btn" aria-label="Draw circle"><svg viewBox="0 0 32 32"><circle cx="16" cy="16" r="11" fill="#bdbdbd" stroke-width="2.500"/></svg></button>
    <button class="tool-btn" aria-label="Draw polygon"><svg viewBox="0 0 32 32"><path d="M5 4l22 4v16L6 28l9-10z" fill="#bdbdbd"/></svg></button>
    <button class="tool-btn" aria-label="Draw bezier"><svg viewBox="0 0 32 32"><path d="M9 28q0-10 7-11t7-13"/><path d="M3 16l26-1" stroke="#1a81c4"/><circle cx="5" cy="16" r="2" fill="#1a81c4" stroke="none"/><circle cx="27" cy="15" r="2" fill="#1a81c4" stroke="none"/></svg></button>
    <button class="tool-btn" aria-label="Place image"><svg viewBox="0 0 32 32"><rect x="3" y="3" width="26" height="26" rx="5" fill="#545454" stroke="none"/><path d="M5 26l8-12 6 8 3-3 5 7z" fill="#fff" stroke="none"/><circle cx="21" cy="9" r="3" fill="#fff" stroke="none"/></svg></button>
    <button class="tool-btn" aria-label="Place text"><svg viewBox="0 0 32 32"><path d="M6 6h20M16 5v23" stroke-width="4"/></svg></button>
    <button class="tool-btn" aria-label="Text box"><svg viewBox="0 0 32 32"><path d="M5 6h23v20H5z" fill="#bdbdbd" stroke-width="2.500"/><path d="M9 12h14M9 16h14M9 20h8"/></svg></button>
    <button class="tool-btn" aria-label="Table"><svg viewBox="0 0 32 32"><path d="M2 2h28v28H2z" fill="#fff" stroke="none"/><path d="M2 2h28v9H2z" fill="#c6c6c6" stroke="none"/><path d="M2 2h28v28H2zM2 16h28M11 2v28M21 2v28" stroke-width="1.500"/></svg></button>
    <button class="tool-btn more" aria-label="Dimension"><svg viewBox="0 0 32 32"><path d="M6 5h22M16 26h14M26 8v16M24 10l2-3 2 3M24 21l2 3 2-3" stroke-width="1.500"/><circle cx="6" cy="5" r="4" fill="#1a81c4" stroke="none"/><circle cx="16" cy="26" r="4" fill="#1a81c4" stroke="none"/></svg></button>
  </div>

  <aside class="side d-flex flex-column">
    <div class="side-head">Appearance</div>
    <div class="tab-row d-flex" role="tablist"><button class="cur" role="tab">Layers</button><button role="tab">Objects</button><button role="tab">Nets</button></div>
    <div class="d-flex side-small overflow-hidden">
      <div class="layer-box flex-grow-1" id="layerBox"><ul class="list-unstyled m-0" id="layerList"></ul></div>
      <div class="thumb-track"><span></span></div>
    </div>
    <button class="fold side-small d-flex align-items-center"><svg width="8" height="12"><path d="M1 1l5 5-5 5z" fill="#000"/></svg>Layer Display Options</button>
    <div class="side-form side-small">
      <label class="d-block" for="presets">Presets (Ctrl+Tab):</label>
      <select id="presets" class="form-select pick"><option>---</option></select>
      <label class="d-block" for="views">Viewports (Shift+Tab):</label>
      <select id="views" class="form-select pick"><option>---</option></select>
    </div>
    <div class="side-head mt-2">Selection Filter</div>
    <div class="filter-grid side-small d-flex flex-wrap" id="filters"></div>
  </aside>
</main>

<footer class="flex-shrink-0">
  <div class="counts">
    <table><thead><tr><th>Pads</th><th>Vias</th><th>Track Segments</th><th>Nets</th><th>Unrouted</th></tr></thead>
    <tbody><tr><td>77</td><td>0</td><td>0</td><td>22</td><td>37</td></tr></tbody></table>
  </div>
  <div class="status-strip d-flex">
    <span class="s-file">File 'D:\FAB ACADEMY 2026\my_Documentation\public\files\week06\pcb_xiao_based...</span><span class="s-z">Z 2.32</span><span class="s-xy">X 68.5000  Y 53.5000</span><span class="s-d">dx -15.5000  dy -17.0000  dist 23.0054</span><span class="s-g">grid 0.5000</span><span class="s-u">mm</span><span class="s-m">Select item(s)</span>
  </div>
</footer>

<script>
  const layers = [["F.Cu","#c83434"],["B.Cu","#4d7fc4"],["F.Adhesive","#840084"],["B.Adhesive","#000084"],["F.Paste","#9a928b"],["B.Paste","#00b3b3"],
    ["F.Silkscreen","#f2eda1"],["B.Silkscreen","#e8b2a7"],["F.Mask","#58307a"],["B.Mask","#0d6e5c"],["User.Drawings","#c2c2c2"],["User.Comments","#5994dc"],
    ["User.Eco1","#b4dbd2"],["User.Eco2","#d8c852"],["Edge.Cuts","#d0d2cd"],["Margin","#ff26e2"],["F.Courtyard","#ff26e2"],["B.Courtyard","#26e9ff"],
    ["F.Fab","#afafaf"],["B.Fab","#585d84"],["User.1","#c2c2c2"],["User.2","#5994dc"],["User.3","#b4dbd2"],["User.4","#d8c852"]];
  document.getElementById("layerList").innerHTML = layers.map(([name, color]) => {
    const cur = name === "Edge.Cuts";
    return `<li class="d-flex align-items-center${cur ? " cur" : ""}"><span class="arr">${cur ? '<svg viewBox="0 0 16 16"><path d="M1 2l6 6-6 6z" fill="#2a3fd8"/></svg>' : ""}</span>` +
      `<span class="chip" style="background:${color}"></span>` +
      `<svg viewBox="0 0 16 16"><circle cx="8" cy="8" r="8" fill="#545454"/><path d="M1 8q7-8 14 0-7 8-14 0z" fill="#efefef"/><circle cx="8" cy="8" r="3" fill="#545454"/><circle cx="8" cy="8" r="1" fill="#efefef"/></svg>${name}</li>`;
  }).join("");
  document.getElementById("layerBox").scrollTop = 14;

  const filters = ["All items","Locked items","Footprints","Text","Tracks","Vias","Pads","Graphics","Zones","Rule Areas","Dimensions","Other items"];
  document.getElementById("filters").innerHTML = filters.map((name, i) =>
    `<div class="d-flex align-items-center"><input class="form-check-input" type="checkbox" id="f${i}"${name === "Locked items" ? "" : " checked"}><label for="f${i}">${name}</label></div>`).join("");
</script>
</body>
</html>
